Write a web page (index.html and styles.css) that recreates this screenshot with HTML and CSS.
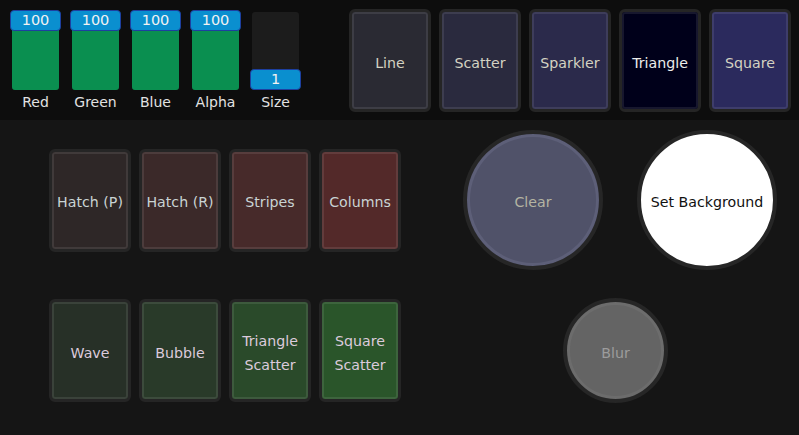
FILE: index.html
```html
<!DOCTYPE html>
<html lang="en">
<head>
    <meta charset="UTF-8">
    <meta name="viewport" content="width=device-width, initial-scale=1.0">
    <title>Paint Controls</title>
    <link rel="stylesheet" href="styles.css">
</head>
<body>
    <header class="top">
        <div class="sliders">
            <div class="slider">
                <div class="rail">
                    <div class="fill" style="height: 100%"></div>
                    <div class="thumb" style="top: -2px">100</div>
                </div>
                <div class="label">Red</div>
            </div>
            <div class="slider">
                <div class="rail">
                    <div class="fill" style="height: 100%"></div>
                    <div class="thumb" style="top: -2px">100</div>
                </div>
                <div class="label">Green</div>
            </div>
            <div class="slider">
                <div class="rail">
                    <div class="fill" style="height: 100%"></div>
                    <div class="thumb" style="top: -2px">100</div>
                </div>
                <div class="label">Blue</div>
            </div>
            <div class="slider">
                <div class="rail">
                    <div class="fill" style="height: 100%"></div>
                    <div class="thumb" style="top: -2px">100</div>
                </div>
                <div class="label">Alpha</div>
            </div>
            <div class="slider">
                <div class="rail">
                    <div class="thumb" style="top: 57px">1</div>
                </div>
                <div class="label">Size</div>
            </div>
        </div>
        <div class="modes">
            <button class="pad line">Line</button>
            <button class="pad scatter">Scatter</button>
            <button class="pad sparkler">Sparkler</button>
            <button class="pad triangle">Triangle</button>
            <button class="pad square">Square</button>
        </div>
    </header>
    <main>
        <div class="row first">
            <div class="pads">
                <button class="pad red hatch-p">Hatch (P)</button>
                <button class="pad red hatch-r">Hatch (R)</button>
                <button class="pad red stripes">Stripes</button>
                <button class="pad red columns">Columns</button>
            </div>
            <button class="round clear">Clear</button>
            <button class="round set-bg">Set Background</button>
        </div>
        <div class="row second">
            <div class="pads">
                <button class="pad green wave">Wave</button>
                <button class="pad green bubble">Bubble</button>
                <button class="pad green tri-scatter">Triangle<br>Scatter</button>
                <button class="pad green sq-scatter">Square<br>Scatter</button>
            </div>
            <button class="round blur">Blur</button>
        </div>
    </main>
</body>
</html>
```

FILE: styles.css
```css
body {
    margin: 0;
    width: 799px;
    height: 435px;
    overflow: hidden;
    background-color: #151515;
    font-family: "DejaVu Sans", sans-serif;
    font-size: 14px;
}
button {
    font-family: inherit;
    font-size: 14.2px;
    line-height: 24px;
    padding: 4px 0 0;
    cursor: pointer;
}

/* top bar */
.top {
    height: 120px;
    background-color: #0d0d0d;
    display: flex;
    align-items: flex-start;
    box-sizing: border-box;
    padding: 0 8px 0 10px;
}
.sliders {
    display: flex;
    gap: 9px;
    padding-top: 10px;
}
.slider {
    width: 51px;
    display: flex;
    flex-direction: column;
    align-items: center;
}
.rail {
    position: relative;
    width: 47px;
    height: 78px;
    margin-top: 2px;
    background-color: #1c1c1c;
    border-radius: 3px;
}
.fill {
    position: absolute;
    left: 0;
    right: 0;
    bottom: 0;
    background-color: #0a8f50;
    border-radius: 3px;
}
.thumb {
    position: absolute;
    left: -2px;
    right: -2px;
    height: 21px;
    box-sizing: border-box;
    background-color: #0a8fcf;
    border: 1.5px solid #1d3fa0;
    border-radius: 4px;
    color: #f2f2f2;
    text-align: center;
    line-height: 18px;
    font-size: 14.5px;
}
.label {
    margin-top: 3px;
    color: #e2e2e2;
    line-height: 18px;
}
.modes {
    display: flex;
    gap: 8px;
    margin-left: auto;
    padding-top: 9px;
}

/* square pads */
.pad {
    width: 82px;
    height: 103px;
    box-sizing: border-box;
    border: 3px solid #252525;
    border-radius: 6px;
    box-shadow: inset 0 0 0 2px rgba(255, 255, 255, 0.09);
    color: #d4d2c2;
}
.line { background-color: #2a2a33; }
.scatter { background-color: #2a2a3e; }
.sparkler { background-color: #2b2a4b; }
.triangle { background-color: #00001a; color: #ececec; }
.square { background-color: #2b2a5d; }

.red { color: #c9d3d3; }
.hatch-p { background-color: #2e2727; }
.hatch-r { background-color: #3b2929; }
.stripes { background-color: #472a2a; }
.columns { background-color: #532929; }

.green { color: #dccbdc; }
.wave { background-color: #273027; }
.bubble { background-color: #293a29; }
.tri-scatter { background-color: #2a4a2a; }
.sq-scatter { background-color: #2a552a; }

/* main area */
.row {
    display: flex;
    align-items: center;
    padding-left: 49px;
}
.row.first {
    margin-top: 10px;
}
.row.second {
    margin-top: 28px;
}
.pads {
    display: flex;
    gap: 8px;
}

/* round buttons */
.round {
    box-sizing: border-box;
    border-radius: 50%;
    border: 4px solid #262626;
}
.clear {
    width: 140px;
    height: 140px;
    margin-left: 62px;
    background-color: #505269;
    box-shadow: inset 0 0 0 3px #5d5f78;
    color: #b4b4a2;
}
.set-bg {
    width: 140px;
    height: 140px;
    margin-left: 34px;
    background-color: #ffffff;
    color: #111111;
}
.blur {
    width: 105px;
    height: 105px;
    margin-left: 162px;
    background-color: #646464;
    box-shadow: inset 0 0 0 3px #6c6c6c;
    color: #9c9c9c;
}
```
